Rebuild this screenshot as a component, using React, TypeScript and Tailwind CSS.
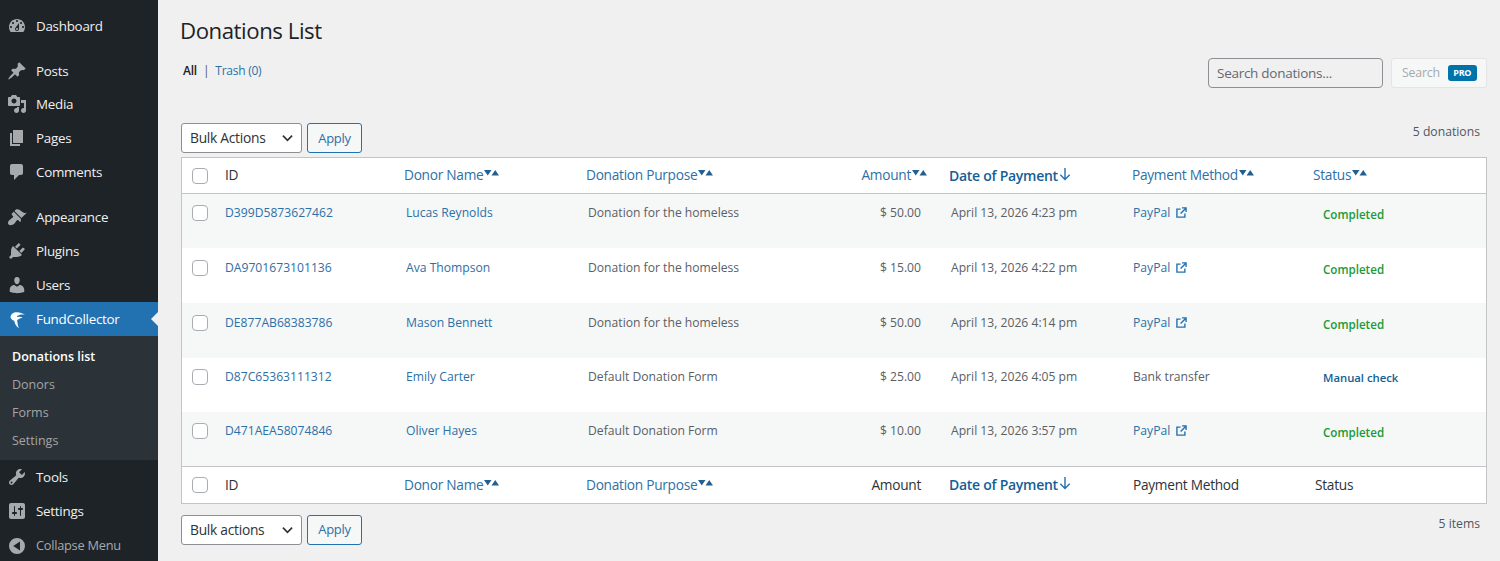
import React from "react";

const P: Record<string, string> = {
  dashboard: "M3.76 16h12.48c1.1-1.37 1.76-3.11 1.76-5 0-4.42-3.58-8-8-8s-8 3.58-8 8c0 1.89.66 3.63 1.76 5zM10 4c.55 0 1 .45 1 1s-.45 1-1 1-1-.45-1-1 .45-1 1-1zM6 6c.55 0 1 .45 1 1s-.45 1-1 1-1-.45-1-1 .45-1 1-1zm8 0c.55 0 1 .45 1 1s-.45 1-1 1-1-.45-1-1 .45-1 1-1zm-5.37 5.55L12 7v6c0 1.1-.9 2-2 2s-2-.9-2-2c0-.57.24-1.08.63-1.45zM4 10c.55 0 1 .45 1 1s-.45 1-1 1-1-.45-1-1 .45-1 1-1zm12 0c.55 0 1 .45 1 1s-.45 1-1 1-1-.45-1-1 .45-1 1-1zm-5 3c0-.55-.45-1-1-1s-1 .45-1 1 .45 1 1 1 1-.45 1-1z",
  posts: "M10.44 3.02l1.82-1.82 6.36 6.35-1.83 1.82c-1.05-.68-2.48-.57-3.41.36l-.75.75c-.92.93-1.04 2.35-.35 3.41l-1.83 1.82-2.41-2.41-2.8 2.79c-.42.42-3.38 2.71-3.8 2.29s1.86-3.39 2.28-3.81l2.79-2.79L4.1 9.36l1.83-1.82c1.05.69 2.48.57 3.4-.36l.75-.75c.93-.92 1.05-2.35.36-3.41z",
  media: "M13 11V4c0-.55-.45-1-1-1h-1.67L9 1H5L3.67 3H2c-.55 0-1 .45-1 1v7c0 .55.45 1 1 1h10c.55 0 1-.45 1-1zM7 4.5c1.38 0 2.5 1.12 2.5 2.5S8.38 9.5 7 9.5 4.5 8.38 4.5 7 5.62 4.5 7 4.5zM14 6h5v10.5c0 1.38-1.12 2.5-2.5 2.5S14 17.88 14 16.5s1.12-2.5 2.5-2.5c.17 0 .34.02.5.05V9h-3V6zm-4 8.05V13h2v3.5c0 1.38-1.12 2.5-2.5 2.5S7 17.88 7 16.5 8.12 14 9.5 14c.17 0 .34.02.5.05z",
  pages: "M6 15V2h10v13H6zm-1 1h8v2H3V5h2v11z",
  comments: "M5 2h9c1.1 0 2 .9 2 2v7c0 1.1-.9 2-2 2h-2l-5 5v-5H5c-1.1 0-2-.9-2-2V4c0-1.1.9-2 2-2z",
  appearance: "M14.48 11.06L7.41 3.99l1.5-1.5c.5-.56 2.3-.47 3.51.32 1.21.8 1.43 1.28 2.91 2.1 1.18.64 2.45 1.26 4.45.85zm-.71.71L6.7 4.7 4.93 6.47c-.39.39-.39 1.02 0 1.41l1.06 1.06c.39.39.39 1.03 0 1.42-.6.6-1.43 1.11-2.21 1.69-.35.26-.7.53-1.01.84C1.43 13.23.28 16.2 1.7 17.62c1.42 1.42 4.4.27 5.74-1.07.31-.31.58-.66.84-1.01.58-.78 1.09-1.61 1.69-2.21.39-.39 1.02-.39 1.41 0l1.06 1.06c.39.39 1.02.39 1.41 0z",
  plugins: "M13.11 4.36L9.87 7.6 8 5.73l3.24-3.24c.35-.34 1.05-.2 1.56.32.52.51.66 1.21.31 1.55zm-8 1.77l.91-1.12 9.01 9.01-1.19.84c-.71.71-2.63 1.16-3.82 1.16H6.14L4.9 17.26c-.59.59-1.54.59-2.12 0-.59-.58-.59-1.53 0-2.12l1.24-1.24v-3.88c0-1.13.4-3.19 1.09-3.89zm7.26 3.97l3.24-3.24c.34-.35 1.04-.21 1.55.31.52.51.66 1.21.31 1.55l-3.24 3.25z",
  users: "M10 9.25c-2.27 0-2.73-3.44-2.73-3.44C7 4.02 7.82 2 9.97 2c2.16 0 2.98 2.02 2.71 3.81 0 0-.41 3.44-2.68 3.44zm0 2.57L12.72 10c2.39 0 4.52 2.33 4.52 4.53v2.49s-3.65 1.13-7.24 1.13c-3.65 0-7.24-1.13-7.24-1.13v-2.49c0-2.25 1.94-4.48 4.47-4.48z",
  tools: "M16.68 9.77c-1.34 1.34-3.3 1.67-4.95.99l-5.41 6.52c-.99.99-2.59.99-3.58 0s-.99-2.59 0-3.57l6.52-5.42c-.68-1.65-.35-3.61.99-4.95 1.28-1.28 3.12-1.62 4.72-1.06l-2.89 2.89 2.82 2.82 2.86-2.87c.53 1.58.18 3.39-1.08 4.65zM3.81 16.21c.4.39 1.04.39 1.43 0 .4-.4.4-1.04 0-1.43-.39-.4-1.03-.4-1.43 0-.39.39-.39 1.03 0 1.43z",
  settings: "M18 16V4c0-1.1-.9-2-2-2H4c-1.1 0-2 .9-2 2v12c0 1.1.9 2 2 2h12c1.1 0 2-.9 2-2zM8 11h1c.55 0 1 .45 1 1s-.45 1-1 1H8v1.5c0 .28-.22.5-.5.5s-.5-.22-.5-.5V13H6c-.55 0-1-.45-1-1s.45-1 1-1h1V5.5c0-.28.22-.5.5-.5s.5.22.5.5V11zm5-2h-1c-.55 0-1-.45-1-1s.45-1 1-1h1V5.5c0-.28.22-.5.5-.5s.5.22.5.5V7h1c.55 0 1 .45 1 1s-.45 1-1 1h-1v5.5c0 .28-.22.5-.5.5s-.5-.22-.5-.5V9z",
  collapse: "M10 2a8 8 0 1 0 0 16 8 8 0 0 0 0-16zM13 14.5 6.2 10 13 5.5z",
  fund: "M3.5 8.2C3.8 4.6 6.8 3 10 3.2 12.8 3.4 15.4 4.2 18 5.8 15.4 5.2 12.6 5.4 10.9 6.6 10.2 7.1 9.9 7.7 10 8.3 11.6 7.7 13.8 7.7 15.6 8.4 13.8 9 11.8 9.8 10.2 11 10.2 13.5 10.9 16 11.8 19.2 9 17.4 7.6 14.6 7.2 11.6 5.8 11.6 4.4 10.4 3.5 8.2z",
};

function Icon({ name, className = "w-5 h-5" }: { name: string; className?: string }) {
  return (
    <svg viewBox="0 0 20 20" className={className} fill="currentColor" fillRule="evenodd">
      <path d={P[name]} />
    </svg>
  );
}

function MenuItem({ icon, label, className = "h-[34px]" }: { icon: string; label: string; className?: string }) {
  return (
    <div className={`flex items-center pl-[7px] text-[13.4px] tracking-[-0.02em] text-[#f0f0f1] ${className}`}>
      <span className="w-[29px] text-[#a7aaad]"><Icon name={icon} /></span>
      <span>{label}</span>
    </div>
  );
}

function Sidebar() {
  return (
    <aside className="w-[158px] h-[561px] shrink-0 overflow-hidden bg-[#1d2327] pt-[9px]">
      <MenuItem icon="dashboard" label="Dashboard" />
      <div className="h-[11px]" />
      <MenuItem icon="posts" label="Posts" className="h-[33px] pt-px" />
      <MenuItem icon="media" label="Media" />
      <MenuItem icon="pages" label="Pages" />
      <MenuItem icon="comments" label="Comments" />
      <div className="h-[11px]" />
      <MenuItem icon="appearance" label="Appearance" />
      <MenuItem icon="plugins" label="Plugins" />
      <MenuItem icon="users" label="Users" />
      <div className="relative flex items-center h-[34px] pl-[7px] text-[13.4px] tracking-[-0.02em] text-white bg-[#2271b1]">
        <span className="w-[29px] text-white"><Icon name="fund" /></span>
        <span>FundCollector</span>
        <span className="absolute right-0 top-[10px] border-y-[7px] border-r-[7px] border-y-transparent border-r-[#f0f0f1]" />
      </div>
      <div className="flex flex-col bg-[#2c3338] h-[124px] pt-[7px] pl-3 text-[12.5px] text-[#c3c4c7]/80">
        <div className="h-[28px] leading-[28px] font-semibold text-white">Donations list</div>
        <div className="h-[28px] leading-[28px]">Donors</div>
        <div className="h-[28px] leading-[28px]">Forms</div>
        <div className="h-[28px] leading-[28px]">Settings</div>
      </div>
      <MenuItem icon="tools" label="Tools" />
      <MenuItem icon="settings" label="Settings" />
      <MenuItem icon="collapse" label="Collapse Menu" className="h-[34px] mt-[1px] !text-[12.8px] !text-[#a7aaad]" />
    </aside>
  );
}

const GRID = "grid grid-cols-[43px_179px_182px_254px_109px_183px_181px_1fr]";

function Check() {
  return <span className="block ml-[10px] w-4 h-4 rounded-[4px] border border-[#a9adb2] bg-white" />;
}

function SortArrows() {
  return (
    <svg viewBox="0 0 15 6" className="w-[15px] h-[6px] fill-[#24608f] ml-px -mt-[4px]">
      <path d="M0 0h7.5L3.75 5.5zM7.5 5.5 11.25 0 15 5.5z" />
    </svg>
  );
}

function DownArrow() {
  return (
    <svg viewBox="0 0 12 14" className="w-3 h-[14px] ml-[1px] -mt-[3px] fill-none stroke-[#2271b1] stroke-[1.4]">
      <path d="M6 1v11.5M1.3 7.8 6 12.5l4.7-4.7" />
    </svg>
  );
}

function ExternalIcon() {
  return (
    <svg viewBox="0 0 12 12" className="w-[11px] h-[11px] ml-[6px] fill-none stroke-[#2271b1] stroke-[1.5]">
      <path d="M5 2.3H1v8.7h8.7V7M6.5 1h4.5v4.5M11 1 5 7" />
    </svg>
  );
}

function HeaderLabel({ label }: { label: string }) {
  return (
    <span className="flex items-center text-[#2d70a6]">
      {label}
      <SortArrows />
    </span>
  );
}

function HeadRow({ footer = false }: { footer?: boolean }) {
  return (
    <div className={`${GRID} items-center text-[13.7px] tracking-[-0.02em] text-[#2c3338] ${footer ? "h-[37px] border-t border-[#c3c4c7]" : "h-[36px] border-b border-[#c3c4c7]"}`}>
      <Check />
      <span>ID</span>
      <HeaderLabel label="Donor Name" />
      <HeaderLabel label="Donation Purpose" />
      {footer ? (
        <span className="text-right pr-[28px]">Amount</span>
      ) : (
        <span className="flex justify-end pr-[22px]"><HeaderLabel label="Amount" /></span>
      )}
      <span className="flex items-center -mt-px text-[14px] font-semibold text-[#135e96]">Date of Payment<DownArrow /></span>
      {footer ? <span className="pl-px">Payment Method</span> : <HeaderLabel label="Payment Method" />}
      {footer ? <span className="pl-[2px]">Status</span> : <HeaderLabel label="Status" />}
    </div>
  );
}

type Row = { id: string; donor: string; purpose: string; amount: string; date: string; method: string; status: string; h: string };
const rows: Row[] = [
  { id: "D399D5873627462", donor: "Lucas Reynolds", purpose: "Donation for the homeless", amount: "$ 50.00", date: "April 13, 2026 4:23 pm", method: "PayPal", status: "Completed", h: "h-[54px] pt-[10px]" },
  { id: "DA9701673101136", donor: "Ava Thompson", purpose: "Donation for the homeless", amount: "$ 15.00", date: "April 13, 2026 4:22 pm", method: "PayPal", status: "Completed", h: "h-[55px] pt-[11px]" },
  { id: "DE877AB68383786", donor: "Mason Bennett", purpose: "Donation for the homeless", amount: "$ 50.00", date: "April 13, 2026 4:14 pm", method: "PayPal", status: "Completed", h: "h-[55px] pt-[11px]" },
  { id: "D87C65363111312", donor: "Emily Carter", purpose: "Default Donation Form", amount: "$ 25.00", date: "April 13, 2026 4:05 pm", method: "Bank transfer", status: "Manual check", h: "h-[54px] pt-[10px]" },
  { id: "D471AEA58074846", donor: "Oliver Hayes", purpose: "Default Donation Form", amount: "$ 10.00", date: "April 13, 2026 3:57 pm", method: "PayPal", status: "Completed", h: "h-[54px] pt-[10px]" },
];

function DataRow({ r, odd }: { r: Row; odd: boolean }) {
  const manual = r.status === "Manual check";
  return (
    <div className={`${GRID} ${r.h} text-[12.15px] tracking-normal leading-[17px] text-[#5a6066] ${odd ? "bg-[#f6f7f7]" : "bg-white"}`}>
      <div className="mt-[1px]"><Check /></div>
      <span className="text-[#2d70a6]">{r.id}</span>
      <span className="pl-[2px] text-[#2d70a6]">{r.donor}</span>
      <span className="pl-[2px]">{r.purpose}</span>
      <span className="text-right pr-[28px]">{r.amount}</span>
      <span className="pl-[2px]">{r.date}</span>
      <span className="pl-px">
        {r.method === "PayPal" ? (
          <span className="flex items-center text-[#2d70a6]">PayPal<ExternalIcon /></span>
        ) : r.method}
      </span>
      <span className={manual ? "pl-[10px] pt-px text-[11.3px] font-semibold text-[#135e96]" : "pl-[10px] pt-[2px] text-[11.6px] font-semibold text-[#1a9a38]"}>{r.status}</span>
    </div>
  );
}

function Bulk({ label, textClass = "" }: { label: string; textClass?: string }) {
  return (
    <div className="flex gap-[5px]">
      <div className="flex items-center justify-between w-[121px] h-[30px] px-2 rounded-[3px] border border-[#8c8f94] bg-white text-[13.8px] tracking-[-0.02em] text-[#2c3338]">
        <span className={textClass}>{label}</span>
        <svg viewBox="0 0 12 8" className="w-[11px] h-[8px] fill-none stroke-[#2c3338] stroke-[1.8]"><path d="M1 1.5 6 6.5l5-5" /></svg>
      </div>
      <div className="flex items-center justify-center w-[55px] h-[30px] rounded-[3px] border border-[#2271b1] bg-[#f6f7f7] text-[13px] tracking-[-0.02em] text-[#2d70a6]"><span className={textClass}>Apply</span></div>
    </div>
  );
}

export default function App() {
  return (
    <div className="flex h-[561px] w-[1500px] overflow-hidden bg-[#f0f0f1] font-['Open_Sans','Noto_Sans',sans-serif]">
      <Sidebar />
      <main className="flex-1 pl-[23px] pr-[13px] pt-[16px]">
        <h1 className="-ml-px text-[22.2px] tracking-[-0.02em] leading-[30px] font-normal text-[#1d2327]">Donations List</h1>
        <div className="flex justify-between mt-[11px] h-[66px]">
          <div className="text-[12px] tracking-[-0.02em] leading-[18px] pl-[2px] pt-[5px] text-[#50575e]">
            <span className="font-semibold text-[#1d2327]">All</span>
            <span className="mx-[6px]">|</span>
            <span className="text-[#2d70a6]">Trash (0)</span>
          </div>
          <div className="flex gap-2 h-[30px] mt-[1px]">
            <div className="flex items-center w-[175px] h-[30px] px-2 rounded-[4px] border border-[#8c8f94] bg-[#f0f0f1] text-[13.5px] tracking-[-0.02em] text-[#646970]">Search donations...</div>
            <div className="flex items-center gap-2 w-[96px] h-[30px] pl-[10px] rounded-[3px] border border-[#e4e4e6] bg-[#f6f7f7] text-[12.4px] tracking-[-0.02em] text-[#a7aaad]">
              Search
              <span className="rounded-[3px] bg-[#0073aa] w-[29px] text-center text-[9px] leading-[16px] font-bold text-white">PRO</span>
            </div>
          </div>
        </div>
        <div className="flex items-center justify-between h-[30px]">
          <Bulk label="Bulk Actions" textClass="pt-px" />
          <span className="pr-[7px] -mt-[11px] text-[12.2px] text-[#50575e]">5 donations</span>
        </div>
        <div className="mt-[4px] border border-[#c3c4c7] bg-white">
          <HeadRow />
          {rows.map((r, i) => <DataRow key={r.id} r={r} odd={i % 2 === 0} />)}
          <HeadRow footer />
        </div>
        <div className="flex items-center justify-between h-[30px] mt-[11px]">
          <Bulk label="Bulk actions" />
          <span className="pr-[7px] -mt-[12px] text-[12.2px] text-[#50575e]">5 items</span>
        </div>
      </main>
    </div>
  );
}
